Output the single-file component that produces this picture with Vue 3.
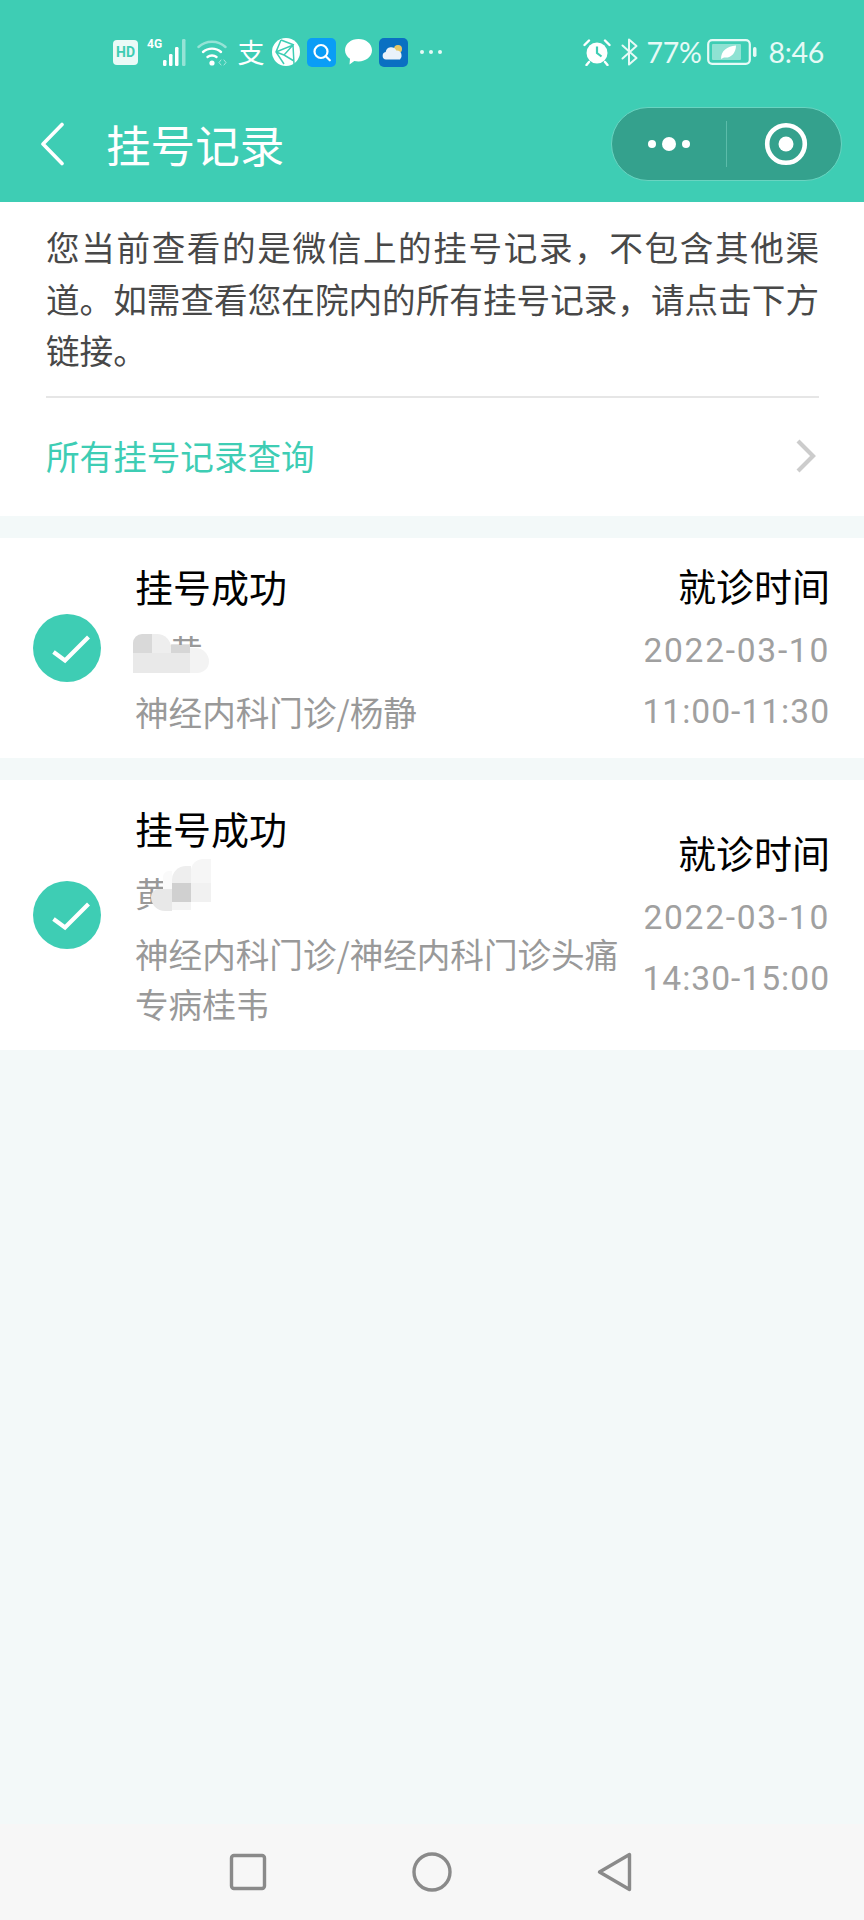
<script setup>
const records = [
  {
    id: 1,
    name: '黄',
    namePad: true,
    dept: '神经内科门诊/杨静',
    date: '2022-03-10',
    time: '11:00-11:30',
    mosaicClass: 'mosaic-a',
    mosaic: [
      { x: 0, y: 0, w: 19, h: 19, c: '#d9d9d9', r: '9px 0 0 0' },
      { x: 19, y: 0, w: 19, h: 19, c: '#eeeeee', r: '0 14px 0 0' },
      { x: 38, y: 11, w: 19, h: 8, c: '#d6d6d6', r: '0' },
      { x: 0, y: 19, w: 57, h: 20, c: '#e9e9e9', r: '0' },
      { x: 57, y: 14, w: 19, h: 25, c: '#f3f3f3', r: '0 14px 12px 0' }
    ]
  },
  {
    id: 2,
    name: '黄',
    namePad: false,
    dept: '神经内科门诊/神经内科门诊头痛专病桂韦',
    date: '2022-03-10',
    time: '14:30-15:00',
    mosaicClass: 'mosaic-b',
    mosaic: [
      { x: 12, y: 12, w: 9, h: 18, c: '#fafafa', r: '6px 0 0 0' },
      { x: 21, y: 7, w: 19, h: 17, c: '#eeeeee', r: '14px 0 0 0' },
      { x: 40, y: 0, w: 20, h: 24, c: '#f6f6f6', r: '12px 0 0 0' },
      { x: 21, y: 24, w: 19, h: 19, c: '#d0d0d0', r: '0' },
      { x: 40, y: 24, w: 20, h: 19, c: '#f1f1f1', r: '0' },
      { x: 0, y: 30, w: 21, h: 22, c: '#e8e8e8', r: '8px 0 0 14px' },
      { x: 21, y: 43, w: 19, h: 8, c: '#f4f4f4', r: '0' }
    ]
  }
]

function cellStyle(m) {
  return {
    left: m.x + 'px',
    top: m.y + 'px',
    width: m.w + 'px',
    height: m.h + 'px',
    background: m.c,
    borderRadius: m.r
  }
}
</script>

<template>
  <div class="screen">
    <header class="header">
      <div class="status">
        <div class="status-left">
          <span class="hd">HD</span>
          <div class="signal">
            <span class="four-g">4G</span>
            <svg width="27" height="27" viewBox="0 0 27 27">
              <rect x="1" y="21" width="3.5" height="6" rx="1.2" fill="#fff" />
              <rect x="7" y="15" width="3.5" height="12" rx="1.2" fill="#fff" />
              <rect x="13" y="8" width="3.5" height="19" rx="1.2" fill="#fff" />
              <rect x="20" y="0" width="3.5" height="27" rx="1.2" fill="#fff" opacity="0.45" />
            </svg>
          </div>
          <svg class="wifi" width="30" height="28" viewBox="0 0 30 28" fill="none" stroke="#fff" stroke-linecap="round">
            <path d="M1.5 9C9 2 21 2 28.5 9" stroke-width="2.4" opacity="0.45" />
            <path d="M6 14C11 9.5 19 9.5 24 14" stroke-width="2.4" />
            <path d="M10.5 19C13 17 17 17 19.5 19" stroke-width="2.4" />
            <circle cx="15" cy="25" r="2.6" fill="#fff" stroke="none" />
            <path d="M24 22l-2 2.5 2 2.5M27 22l2 2.5-2 2.5" stroke-width="1" opacity="0.55" />
          </svg>
          <span class="alipay">支</span>
          <svg class="globe" width="28" height="28" viewBox="0 0 28 28">
            <circle cx="14" cy="14" r="14" fill="#fff" />
            <path d="M9 2L4 14l8 12M9 2l13 5M4 14l17-7 1 19M21 7L12 17l10 6M12 17L4 14" fill="none" stroke="#3ecdb4" stroke-width="1.5" />
          </svg>
          <svg class="app" width="29" height="29" viewBox="0 0 29 29">
            <rect width="29" height="29" rx="5" fill="#0a9df6" />
            <circle cx="14" cy="13.5" r="6.5" fill="none" stroke="#fff" stroke-width="2.2" />
            <path d="M18.8 18.3l4 4" stroke="#fff" stroke-width="2.2" stroke-linecap="round" />
          </svg>
          <svg class="bubble" width="27" height="26" viewBox="0 0 27 26">
            <path d="M13.5 0C21 0 27 4.800 27 11.200S21 22.400 13.500 22.400C12 22.400 10.600 22.200 9.300 21.900L4.500 25.500L5 19.800C2 17.800 0 14.700 0 11.200C0 4.800 6 0 13.500 0Z" fill="#fff" />
          </svg>
          <svg class="app" width="29" height="29" viewBox="0 0 29 29">
            <rect width="29" height="29" rx="5" fill="#0a70c2" />
            <circle cx="19" cy="11" r="4" fill="#e8c766" />
            <path d="M7 21.500a3.800 3.800 0 0 1 -.3-7.500a5.500 5.500 0 0 1 10.500-1.500a4.600 4.600 0 0 1 5.300 4.500a4.500 4.500 0 0 1-1.500 4.500Z" fill="#eaf2fa" />
          </svg>
          <div class="more-dots"><i></i><i></i><i></i></div>
        </div>
        <div class="status-right">
          <svg width="28" height="27" viewBox="0 0 28 27">
            <circle cx="14" cy="14" r="10.500" fill="#fff" />
            <path d="M14 7.500V14l4.500 3.500" fill="none" stroke="#3ecdb4" stroke-width="2.200" />
            <path d="M1.500 6L6 1.500M26.500 6L22 1.500M6 23l-2.500 3M22 23l2.500 3" stroke="#fff" stroke-width="2.400" stroke-linecap="round" />
          </svg>
          <svg class="bt" width="17" height="28" viewBox="0 0 17 28" fill="none" stroke="#e6faf6" stroke-width="2" stroke-linejoin="round" stroke-linecap="round">
            <path d="M1.500 7.500L15.500 20L8 26.500V1.500L15.500 8L1.500 20.500" />
          </svg>
          <span class="percent">77%</span>
          <svg class="battery" width="50" height="26" viewBox="0 0 50 26">
            <rect x="1.200" y="1.200" width="41.600" height="23.600" rx="4" fill="none" stroke="#e6faf6" stroke-width="2.200" />
            <rect x="5" y="5" width="29" height="16" rx="1" fill="#fff" opacity="0.42" />
            <path d="M14 20C14 12 20 7 29 6.500C29 14 24 19.500 17 18.500L14 20Z" fill="#fff" />
            <rect x="46" y="8" width="3.500" height="10" rx="1.700" fill="#e6faf6" />
          </svg>
          <span class="clock">8:46</span>
        </div>
      </div>
      <div class="navbar">
        <svg class="back" width="24" height="44" viewBox="0 0 24 44" fill="none" stroke="#fff" stroke-width="3.600" stroke-linecap="round" stroke-linejoin="round">
          <path d="M22 2.500L3 22l19 19.500" />
        </svg>
        <h1 class="title">挂号记录</h1>
        <div class="capsule">
          <div class="capsule-part dots">
            <span class="dot small"></span>
            <span class="dot big"></span>
            <span class="dot small"></span>
          </div>
          <span class="capsule-line"></span>
          <div class="capsule-part ring">
            <svg width="44" height="44" viewBox="0 0 44 44">
              <circle cx="22" cy="22" r="18.800" fill="none" stroke="#fff" stroke-width="4.600" />
              <circle cx="22" cy="22" r="7.500" fill="#fff" />
            </svg>
          </div>
        </div>
      </div>
    </header>

    <main class="main">
      <section class="notice">
        <p class="notice-text">您当前查看的是微信上的挂号记录，不包含其他渠道。如需查看您在院内的所有挂号记录，请点击下方链接。</p>
        <div class="link-row">
          <span class="link-text">所有挂号记录查询</span>
          <svg width="20" height="34" viewBox="0 0 20 34" fill="none" stroke="#cccccc" stroke-width="4.200">
            <path d="M2 2l15 15L2 32" />
          </svg>
        </div>
      </section>

      <article v-for="r in records" :key="r.id" class="card">
        <div class="check">
          <svg width="68" height="68" viewBox="0 0 68 68">
            <circle cx="34" cy="34" r="34" fill="#3ecdb4" />
            <path d="M20.500 38l11.500 8.500L55.500 23" fill="none" stroke="#fff" stroke-width="4.200" />
          </svg>
        </div>
        <div class="info">
          <div class="info-title">挂号成功</div>
          <div class="info-name" :class="{ 'name-pad': r.namePad }">
            <span>{{ r.name }}</span>
            <div class="mosaic" :class="r.mosaicClass">
              <i v-for="(m, i) in r.mosaic" :key="i" :style="cellStyle(m)"></i>
            </div>
          </div>
          <div class="info-dept">{{ r.dept }}</div>
        </div>
        <div class="when">
          <div class="when-title">就诊时间</div>
          <div class="when-value">{{ r.date }}</div>
          <div class="when-value when-time">{{ r.time }}</div>
        </div>
      </article>
    </main>

    <footer class="sysnav">
      <svg width="38" height="38" viewBox="0 0 38 38" fill="none" stroke="#8a8a8a" stroke-width="3.400" stroke-linejoin="round">
        <rect x="2.500" y="2.500" width="33" height="33" rx="2.500" />
      </svg>
      <svg width="40" height="40" viewBox="0 0 40 40" fill="none" stroke="#8a8a8a" stroke-width="3.400">
        <circle cx="20" cy="20" r="18" />
      </svg>
      <svg width="36" height="40" viewBox="0 0 36 40" fill="none" stroke="#8a8a8a" stroke-width="3.400" stroke-linejoin="round">
        <path d="M32.500 2.500V37.500L2.500 20Z" />
      </svg>
    </footer>
  </div>
</template>

<style scoped>
.screen {
  width: 864px;
  height: 1920px;
  display: flex;
  flex-direction: column;
  overflow: hidden;
  background: #f3f9f9;
  font-family: "Noto Sans CJK SC", "Noto Sans", sans-serif;
}

.header {
  height: 202px;
  flex: none;
  background: #3ecdb4;
}

.status {
  height: 104px;
  display: flex;
  align-items: center;
  justify-content: space-between;
  padding: 0 40px 0 113px;
  box-sizing: border-box;
}

.status-left,
.status-right {
  display: flex;
  align-items: center;
}

.hd {
  width: 25px;
  height: 25px;
  border-radius: 4px;
  background: #eafaf7;
  color: #3ecdb4;
  font: 700 14px/25px "Roboto", sans-serif;
  text-align: center;
}

.signal {
  display: flex;
  align-items: flex-end;
  position: relative;
  margin-left: 9px;
  width: 42px;
  height: 27px;
  justify-content: flex-end;
}

.four-g {
  position: absolute;
  left: 0;
  top: -2px;
  color: #fff;
  font: 700 12px/14px "Roboto", sans-serif;
}

.wifi {
  margin-left: 8px;
}

.alipay {
  width: 28px;
  margin-left: 10px;
  color: #fff;
  font-size: 27px;
  line-height: 28px;
  text-align: center;
}

.globe {
  margin-left: 7px;
}

.app {
  margin-left: 7px;
}

.bubble {
  margin-left: 9px;
}

.more-dots {
  display: flex;
  gap: 5px;
  margin-left: 12px;
}

.more-dots i {
  width: 4px;
  height: 4px;
  border-radius: 50%;
  background: #e6faf6;
}

.bt {
  margin-left: 10px;
}

.percent,
.clock {
  color: #e6faf6;
  font: 400 28.500px/36px "Lato", "Roboto", sans-serif;
  letter-spacing: -0.300px;
}

.percent {
  margin-left: 8px;
}

.battery {
  margin-left: 6px;
}

.clock {
  margin-left: 11px;
}

.navbar {
  height: 80px;
  display: flex;
  align-items: center;
  padding: 0 22px 0 40px;
}

.back {
  flex: none;
}

.title {
  margin: 0 0 0 42px;
  color: #fff;
  font-size: 44.600px;
  font-weight: 400;
  line-height: 60px;
}

.capsule {
  margin: -1px 0 0 auto;
  width: 231px;
  height: 74px;
  box-sizing: border-box;
  border: 1px solid #69d4c1;
  border-radius: 37px;
  background: #34a18d;
  display: flex;
  align-items: center;
}

.capsule-part {
  height: 100%;
  display: flex;
  align-items: center;
  justify-content: center;
  gap: 6px;
}

.capsule-part.dots {
  flex: none;
  width: 114px;
}

.capsule-part.ring {
  flex: 1;
  padding-left: 4px;
}

.capsule-line {
  width: 1px;
  height: 46px;
  background: #5cbcaa;
}

.dot {
  border-radius: 50%;
  background: #fff;
}

.dot.small {
  width: 8px;
  height: 8px;
}

.dot.big {
  width: 14px;
  height: 14px;
}

.main {
  flex: 1;
}

.notice {
  background: #fff;
  padding: 19px 45px 0 46px;
}

.notice-text {
  margin: 0;
  padding-bottom: 20px;
  border-bottom: 2px solid #e6e6e6;
  color: #484848;
  font-size: 33.600px;
  line-height: 51.500px;
  text-align: justify;
}

.link-row {
  height: 118px;
  box-sizing: border-box;
  padding: 0 3px 2px 0;
  display: flex;
  align-items: center;
  justify-content: space-between;
}

.link-text {
  color: #3ecdb4;
  font-size: 33.600px;
}

.card {
  margin-top: 22px;
  background: #fff;
  display: flex;
  align-items: center;
  padding: 0 34px 0 33px;
}

.check {
  flex: none;
  width: 68px;
  height: 68px;
  margin-right: 34px;
}

.info {
  width: 490px;
  flex: none;
  padding: 17px 0 20.500px;
}

.info-title,
.when-title {
  color: #000;
  font-size: 38px;
  line-height: 62px;
}

.info-title {
  margin-bottom: 3px;
}

.info-name {
  position: relative;
  height: 62px;
  color: #999;
  font-size: 33.600px;
  line-height: 62px;
}

.name-pad span {
  padding-left: 34px;
}

.mosaic {
  position: absolute;
}

.mosaic i {
  position: absolute;
  display: block;
}

.mosaic-a {
  left: -2px;
  top: 14px;
}

.mosaic-b {
  left: 16px;
  top: -3px;
}

.info-dept {
  margin-top: 5px;
  color: #999;
  font-size: 33.600px;
  line-height: 50.500px;
}

.when {
  margin-left: auto;
  text-align: right;
  white-space: nowrap;
}

.when-title {
  margin-bottom: 4px;
}

.when-value {
  color: #a0a0a0;
  font-family: "Roboto", sans-serif;
  font-size: 33.600px;
  line-height: 61px;
  letter-spacing: 1.700px;
}

.when-time {
  letter-spacing: 1px;
}

.sysnav {
  height: 96px;
  flex: none;
  background: #f7f7f7;
  display: flex;
  align-items: center;
  padding-left: 229px;
  gap: 145px;
}
</style>
